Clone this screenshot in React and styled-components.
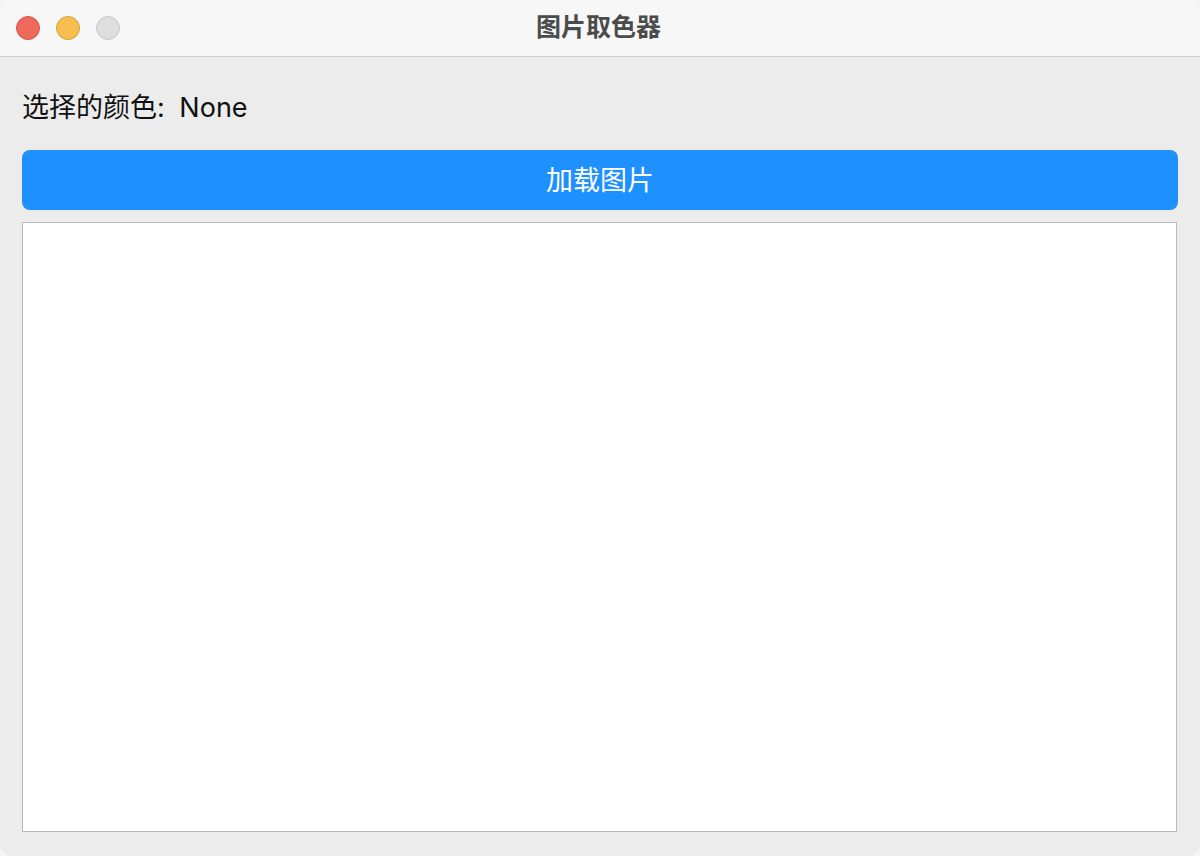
import React from 'react';
import styled, { createGlobalStyle } from 'styled-components';

const GlobalStyle = createGlobalStyle`
  html, body {
    margin: 0;
    padding: 0;
    background: #f4f4f4;
  }
  * { box-sizing: border-box; }
`;

const Window = styled.div`
  width: 1200px;
  height: 856px;
  display: flex;
  flex-direction: column;
  background: #ececec;
  border-radius: 12px;
  overflow: hidden;
  font-family: "Noto Sans CJK SC", "Noto Sans", sans-serif;
`;

const TitleBar = styled.div`
  height: 57px;
  flex-shrink: 0;
  display: flex;
  align-items: center;
  position: relative;
  background: #f7f7f7;
  border-bottom: 1px solid #cfcfcf;
  padding-left: 16px;
`;

const Lights = styled.div`
  display: flex;
  gap: 16px;
`;

const Light = styled.span`
  width: 24px;
  height: 24px;
  border-radius: 50%;
  background: ${p => p.color};
  border: 1px solid ${p => p.edge};
`;

const Title = styled.div`
  position: absolute;
  left: 0;
  right: 0;
  top: 0;
  bottom: 6px;
  display: flex;
  align-items: center;
  justify-content: center;
  font-size: 25px;
  font-weight: 700;
  color: #4b4b4b;
  pointer-events: none;
  padding-right: 3px;
`;

const Content = styled.div`
  flex: 1;
  display: flex;
  flex-direction: column;
  padding: 0 22px 24px 22px;
`;

const ColorLabel = styled.div`
  height: 93px;
  display: flex;
  align-items: center;
  padding-top: 4px;
  font-family: Inter, "Noto Sans CJK SC", sans-serif;
  font-size: 27px;
  color: #111;
  white-space: pre;
  word-spacing: 7px;
`;

const LoadButton = styled.button`
  height: 60px;
  border: none;
  border-radius: 8px;
  background: #1e90ff;
  color: #fff;
  font-family: inherit;
  font-size: 27px;
  padding: 0 0 3px 0;
  cursor: pointer;
  flex-shrink: 0;
`;

const ImageArea = styled.div`
  flex: 1;
  margin-top: 12px;
  margin-right: 1px;
  background: #fff;
  border: 1px solid #b8b8b8;
`;

export default function App() {
  return (
    <>
      <GlobalStyle />
      <Window>
        <TitleBar>
          <Lights>
            <Light color="#ee6a5f" edge="#d5544a" />
            <Light color="#f5be4f" edge="#d9a23a" />
            <Light color="#dedede" edge="#c6c6c6" />
          </Lights>
          <Title>图片取色器</Title>
        </TitleBar>
        <Content>
          <ColorLabel>选择的颜色: None</ColorLabel>
          <LoadButton>加载图片</LoadButton>
          <ImageArea />
        </Content>
      </Window>
    </>
  );
}
